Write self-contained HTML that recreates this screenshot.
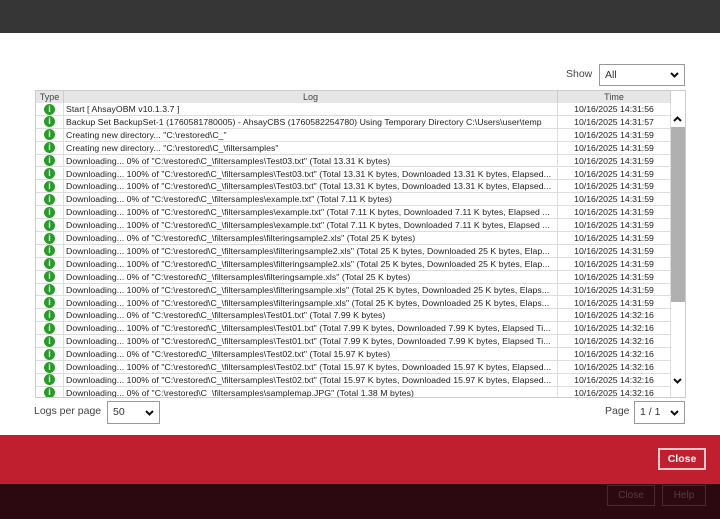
<!DOCTYPE html>
<html><head><style>
*{margin:0;padding:0;box-sizing:border-box}
body{width:720px;height:519px;overflow:hidden;background:#fff;font-family:"Liberation Sans",sans-serif;position:relative}
#top{position:absolute;left:0;top:0;width:720px;height:33px;background:#363636}
#tbl{position:absolute;left:35px;top:90px;width:651px;height:308px;border:1px solid #ccc;overflow:hidden}
.hdr{position:absolute;top:0;height:12px;background:#e6e6e6;font-size:9px;color:#444;text-align:center;line-height:12px;border-right:1px solid #ccc}
.row{position:absolute;left:0;width:635px;height:12.9px;font-size:8.7px;color:#222;line-height:12.5px}
.row div{position:absolute;top:0;height:12.9px;border-bottom:1px solid #ddd;border-right:1px solid #ddd;white-space:nowrap;overflow:hidden}
.ic{left:0;width:28px}
.ic span{position:absolute;left:8px;top:0.5px;width:11px;height:11px;border-radius:50%;background:#2a9a2a;color:#fff;font-weight:bold;font-size:9px;line-height:11px;text-align:center}
.lg{left:28px;width:494px;padding-left:2px;letter-spacing:0.05px}
.tm{left:522px;width:113px;text-align:center}
.sel{position:absolute;border:1px solid #999;background:#fff;font-size:10.5px;color:#333;padding-left:5px}
.chev{position:absolute;right:5px;top:50%;margin-top:-3px}
</style></head><body>
<div id="top"></div>
<div style="position:absolute;left:566px;top:68px;font-size:10.5px;color:#444">Show</div>
<div class="sel" style="left:599px;top:64px;width:86px;height:22px;line-height:20px">All<svg class="chev" width="9" height="6" viewBox="0 0 9 6"><path d="M1 1L4.5 4.5L8 1" stroke="#111" stroke-width="2" fill="none"/></svg></div>
<div id="tbl">
<div class="hdr" style="left:0;width:28px">Type</div>
<div class="hdr" style="left:28px;width:494px">Log</div>
<div class="hdr" style="left:522px;width:113px">Time</div>
<div style="position:absolute;left:635px;top:36px;width:14px;height:175px;background:#b0b0b0"></div>
<svg style="position:absolute;left:637px;top:25px" width="9" height="6" viewBox="0 0 9 6"><path d="M1 5L4.5 1.5L8 5" stroke="#111" stroke-width="2" fill="none"/></svg>
<svg style="position:absolute;left:637px;top:287px" width="9" height="6" viewBox="0 0 9 6"><path d="M1 1L4.5 4.5L8 1" stroke="#111" stroke-width="2" fill="none"/></svg>
<div id="rows"></div>
</div>
<div style="position:absolute;left:34px;top:405px;font-size:10.5px;color:#444">Logs per page</div>
<div class="sel" style="left:107px;top:401px;width:53px;height:23px;line-height:21px">50<svg class="chev" width="9" height="6" viewBox="0 0 9 6"><path d="M1 1L4.5 4.5L8 1" stroke="#111" stroke-width="2" fill="none"/></svg></div>
<div style="position:absolute;left:605px;top:405px;font-size:10.5px;color:#444">Page</div>
<div class="sel" style="left:634px;top:401px;width:51px;height:23px;line-height:21px">1 / 1<svg class="chev" width="9" height="6" viewBox="0 0 9 6"><path d="M1 1L4.5 4.5L8 1" stroke="#111" stroke-width="2" fill="none"/></svg></div>
<div style="position:absolute;left:0;top:435px;width:720px;height:49px;background:#c01f2f"></div>
<div style="position:absolute;left:658px;top:448px;width:48px;height:22px;border:2px solid #f0c8cc;color:#fff;font-size:10.5px;text-align:center;line-height:18px;font-weight:bold">Close</div>
<div style="position:absolute;left:0;top:484px;width:720px;height:35px;background:#2c0910"></div>
<div style="position:absolute;left:607px;top:485px;width:48px;height:21px;border:1px solid #4a2a30;color:#5a3a40;font-size:10px;text-align:center;line-height:19px">Close</div>
<div style="position:absolute;left:662px;top:485px;width:44px;height:21px;border:1px solid #4a2a30;color:#5a3a40;font-size:10px;text-align:center;line-height:19px">Help</div>
<script>
var d=[
['Start [ AhsayOBM v10.1.3.7 ]','14:31:56'],
['Backup Set BackupSet-1 (1760581780005) - AhsayCBS (1760582254780) Using Temporary Directory C:\\Users\\user\\temp','14:31:57'],
['Creating new directory... "C:\\restored\\C_"','14:31:59'],
['Creating new directory... "C:\\restored\\C_\\filtersamples"','14:31:59'],
['Downloading... 0% of "C:\\restored\\C_\\filtersamples\\Test03.txt" (Total 13.31 K bytes)','14:31:59'],
['Downloading... 100% of "C:\\restored\\C_\\filtersamples\\Test03.txt" (Total 13.31 K bytes, Downloaded 13.31 K bytes, Elapsed...','14:31:59'],
['Downloading... 100% of "C:\\restored\\C_\\filtersamples\\Test03.txt" (Total 13.31 K bytes, Downloaded 13.31 K bytes, Elapsed...','14:31:59'],
['Downloading... 0% of "C:\\restored\\C_\\filtersamples\\example.txt" (Total 7.11 K bytes)','14:31:59'],
['Downloading... 100% of "C:\\restored\\C_\\filtersamples\\example.txt" (Total 7.11 K bytes, Downloaded 7.11 K bytes, Elapsed ...','14:31:59'],
['Downloading... 100% of "C:\\restored\\C_\\filtersamples\\example.txt" (Total 7.11 K bytes, Downloaded 7.11 K bytes, Elapsed ...','14:31:59'],
['Downloading... 0% of "C:\\restored\\C_\\filtersamples\\filteringsample2.xls" (Total 25 K bytes)','14:31:59'],
['Downloading... 100% of "C:\\restored\\C_\\filtersamples\\filteringsample2.xls" (Total 25 K bytes, Downloaded 25 K bytes, Elap...','14:31:59'],
['Downloading... 100% of "C:\\restored\\C_\\filtersamples\\filteringsample2.xls" (Total 25 K bytes, Downloaded 25 K bytes, Elap...','14:31:59'],
['Downloading... 0% of "C:\\restored\\C_\\filtersamples\\filteringsample.xls" (Total 25 K bytes)','14:31:59'],
['Downloading... 100% of "C:\\restored\\C_\\filtersamples\\filteringsample.xls" (Total 25 K bytes, Downloaded 25 K bytes, Elaps...','14:31:59'],
['Downloading... 100% of "C:\\restored\\C_\\filtersamples\\filteringsample.xls" (Total 25 K bytes, Downloaded 25 K bytes, Elaps...','14:31:59'],
['Downloading... 0% of "C:\\restored\\C_\\filtersamples\\Test01.txt" (Total 7.99 K bytes)','14:32:16'],
['Downloading... 100% of "C:\\restored\\C_\\filtersamples\\Test01.txt" (Total 7.99 K bytes, Downloaded 7.99 K bytes, Elapsed Ti...','14:32:16'],
['Downloading... 100% of "C:\\restored\\C_\\filtersamples\\Test01.txt" (Total 7.99 K bytes, Downloaded 7.99 K bytes, Elapsed Ti...','14:32:16'],
['Downloading... 0% of "C:\\restored\\C_\\filtersamples\\Test02.txt" (Total 15.97 K bytes)','14:32:16'],
['Downloading... 100% of "C:\\restored\\C_\\filtersamples\\Test02.txt" (Total 15.97 K bytes, Downloaded 15.97 K bytes, Elapsed...','14:32:16'],
['Downloading... 100% of "C:\\restored\\C_\\filtersamples\\Test02.txt" (Total 15.97 K bytes, Downloaded 15.97 K bytes, Elapsed...','14:32:16'],
['Downloading... 0% of "C:\\restored\\C_\\filtersamples\\samplemap.JPG" (Total 1.38 M bytes)','14:32:16']];
var h='';
d.forEach(function(r,i){var t=12+i*12.9;var e=function(s){return s.replace(/&/g,'&amp;').replace(/</g,'&lt;')};
h+='<div class="row" style="top:'+t+'px"><div class="ic"><span>i</span></div><div class="lg">'+e(r[0])+'</div><div class="tm">10/16/2025 '+r[1]+'</div></div>';});
document.getElementById('rows').innerHTML=h;
</script>
</body></html>
